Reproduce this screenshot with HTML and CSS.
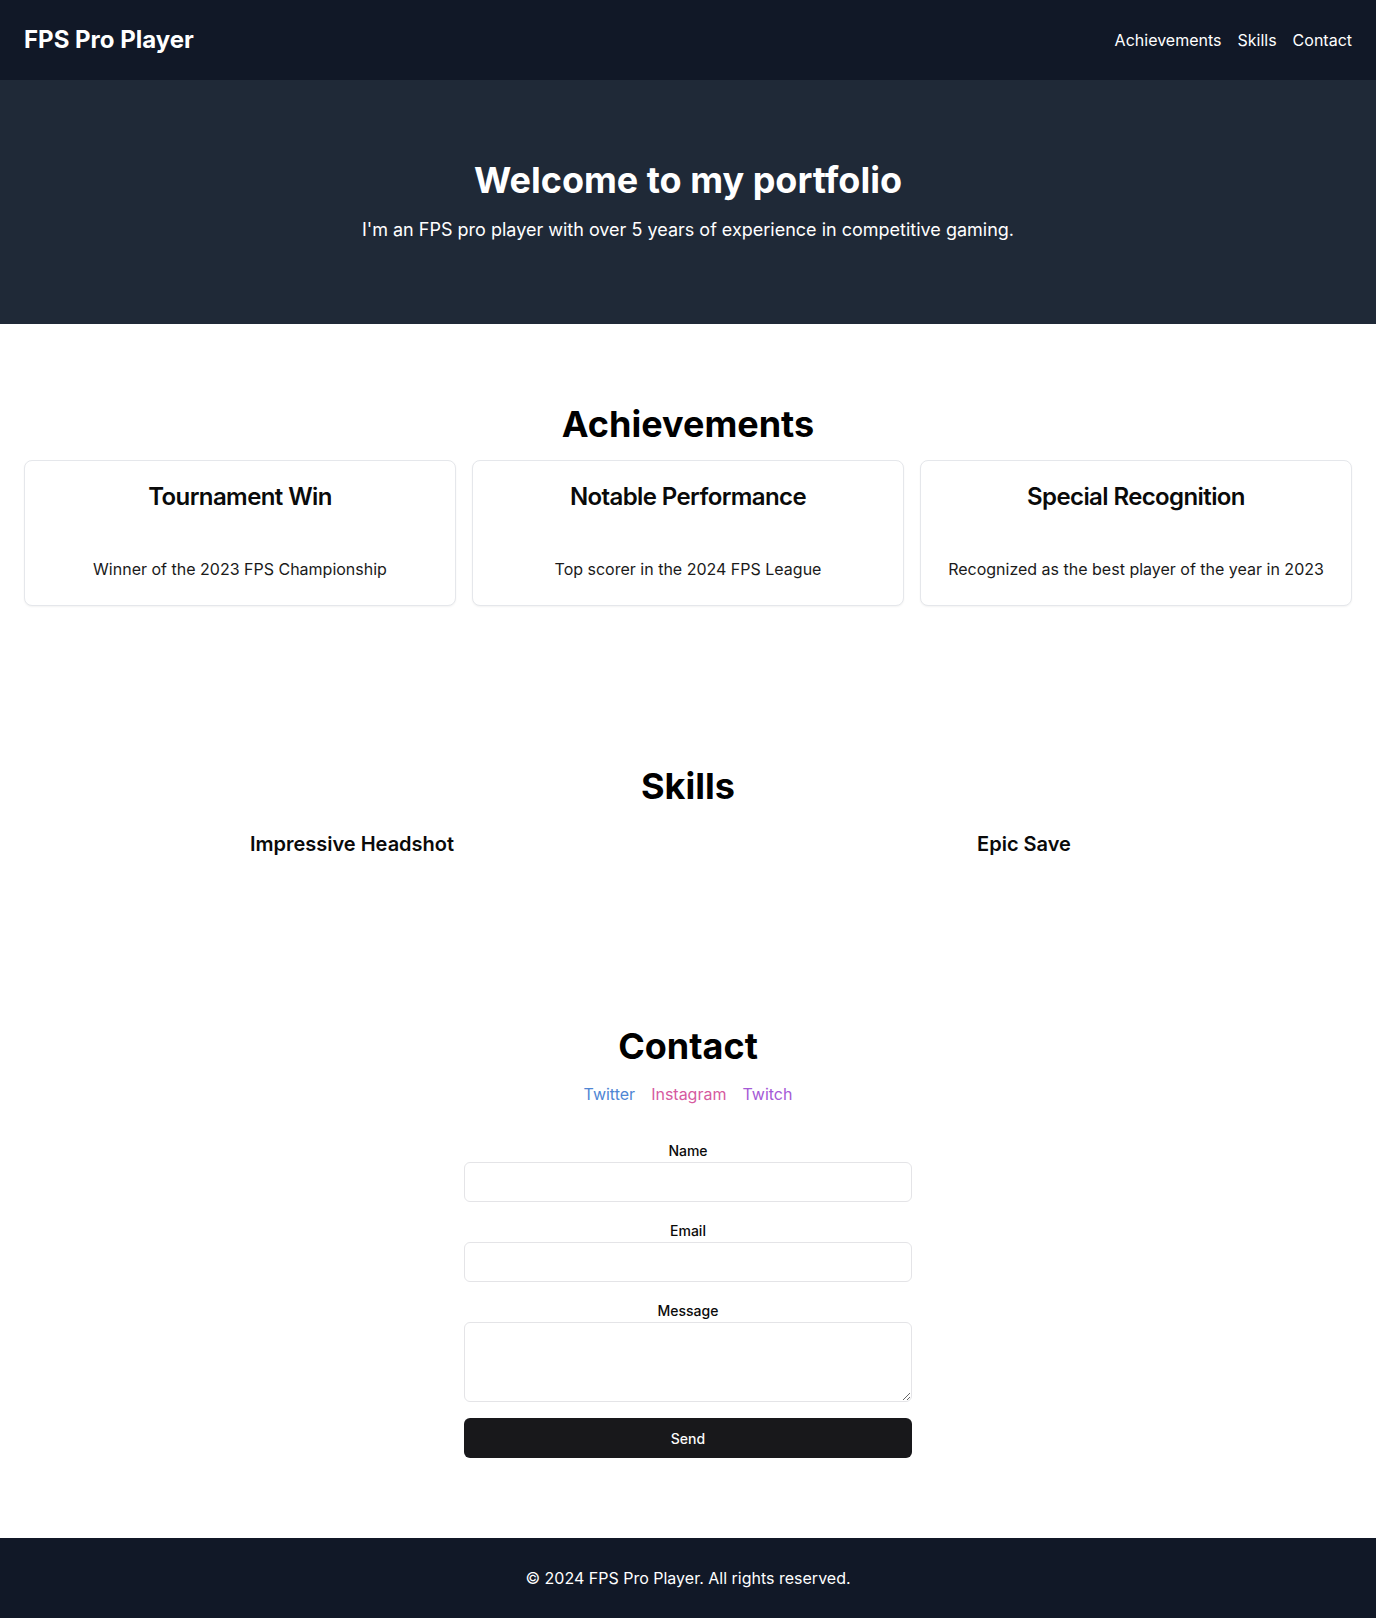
FILE: index.html
```html
<!DOCTYPE html>
<html lang="en">
<head>
<meta charset="utf-8">
<title>FPS Pro Player</title>
<link rel="stylesheet" href="styles.css">
</head>
<body>
<header class="site-header">
  <div class="logo">FPS Pro Player</div>
  <nav class="nav">
    <a href="#achievements">Achievements</a>
    <a href="#skills">Skills</a>
    <a href="#contact">Contact</a>
  </nav>
</header>

<section class="hero">
  <h1>Welcome to my portfolio</h1>
  <p>I'm an FPS pro player with over 5 years of experience in competitive gaming.</p>
</section>

<section class="section" id="achievements">
  <h2 class="section-title">Achievements</h2>
  <div class="cards">
    <div class="card">
      <div class="card-header"><h3 class="card-title">Tournament Win</h3></div>
      <div class="card-content"><p>Winner of the 2023 FPS Championship</p></div>
    </div>
    <div class="card">
      <div class="card-header"><h3 class="card-title">Notable Performance</h3></div>
      <div class="card-content"><p>Top scorer in the 2024 FPS League</p></div>
    </div>
    <div class="card">
      <div class="card-header"><h3 class="card-title">Special Recognition</h3></div>
      <div class="card-content"><p>Recognized as the best player of the year in 2023</p></div>
    </div>
  </div>
</section>

<section class="section" id="skills">
  <h2 class="section-title">Skills</h2>
  <div class="skills">
    <div class="skill"><h3>Impressive Headshot</h3></div>
    <div class="skill"><h3>Epic Save</h3></div>
  </div>
</section>

<section class="section" id="contact">
  <h2 class="section-title">Contact</h2>
  <div class="socials">
    <a class="twitter" href="#">Twitter</a>
    <a class="instagram" href="#">Instagram</a>
    <a class="twitch" href="#">Twitch</a>
  </div>
  <form class="form">
    <div class="group">
      <label for="name">Name</label>
      <input id="name" type="text" class="field">
    </div>
    <div class="group">
      <label for="email">Email</label>
      <input id="email" type="email" class="field">
    </div>
    <div class="group">
      <label for="message">Message</label>
      <textarea id="message" class="field area"></textarea>
    </div>
    <button type="button" class="send">Send</button>
  </form>
</section>

<footer class="footer">
  <p>© 2024 FPS Pro Player. All rights reserved.</p>
</footer>
</body>
</html>
```

FILE: styles.css
```css
* { box-sizing: border-box; }
body {
  margin: 0;
  font-family: Inter, "Noto Sans", sans-serif;
  font-size: 16px;
  line-height: 1.5;
  color: #0a0a0a;
  background: #ffffff;
}
a { text-decoration: none; color: inherit; }
h1, h2, h3, p { margin: 0; }

.site-header {
  background: #111827;
  color: #ffffff;
  padding: 24px;
  display: flex;
  justify-content: space-between;
  align-items: center;
}
.logo {
  font-size: 24px;
  line-height: 32px;
  font-weight: 700;
}
.nav {
  display: flex;
  gap: 16px;
}

.hero {
  background: #1f2937;
  color: #ffffff;
  padding: 80px 24px;
  text-align: center;
}
.hero h1 {
  font-size: 36px;
  line-height: 40px;
  font-weight: 700;
  margin-bottom: 16px;
}
.hero p {
  font-size: 18px;
  line-height: 28px;
}

.section {
  padding: 80px 24px;
  text-align: center;
}
.section-title {
  font-size: 36px;
  line-height: 40px;
  font-weight: 700;
  color: #000;
  margin-bottom: 16px;
}

.cards {
  display: grid;
  grid-template-columns: repeat(3, 1fr);
  gap: 16px;
}
.card {
  border: 1px solid #e5e7eb;
  border-radius: 8px;
  box-shadow: 0 1px 2px rgba(0, 0, 0, 0.05);
  background: #fff;
}
.card-header { padding: 24px; }
.card-title {
  font-size: 24px;
  line-height: 24px;
  font-weight: 600;
  letter-spacing: -0.025em;
}
.card-content { padding: 24px; }
.card-content p { color: #1a1a1a; }

.skills {
  display: grid;
  grid-template-columns: repeat(2, 1fr);
  gap: 16px;
  margin-top: 24px;
}
.skill h3 {
  font-size: 20px;
  line-height: 28px;
  font-weight: 600;
  margin-bottom: 8px;
}

.socials {
  display: flex;
  justify-content: center;
  gap: 16px;
  margin-bottom: 32px;
}
.twitter { color: #4f86d4; }
.instagram { color: #d65a9f; }
.twitch { color: #a55ad6; }

.form {
  max-width: 448px;
  margin: 0 auto;
  display: flex;
  flex-direction: column;
  gap: 16px;
}
.group label {
  font-size: 14px;
  font-weight: 500;
}
.field {
  display: block;
  width: 100%;
  height: 40px;
  border: 1px solid #e4e4e7;
  border-radius: 6px;
  background: #fff;
  padding: 8px 12px;
  font-family: inherit;
  font-size: 14px;
}
.area {
  height: 80px;
  resize: vertical;
}
.send {
  height: 40px;
  width: 100%;
  border: none;
  border-radius: 6px;
  background: #18181b;
  color: #fafafa;
  font-family: inherit;
  font-size: 14px;
  font-weight: 500;
}

.footer {
  background: #111827;
  color: #ffffff;
  text-align: center;
  padding: 28px 24px;
}
```
